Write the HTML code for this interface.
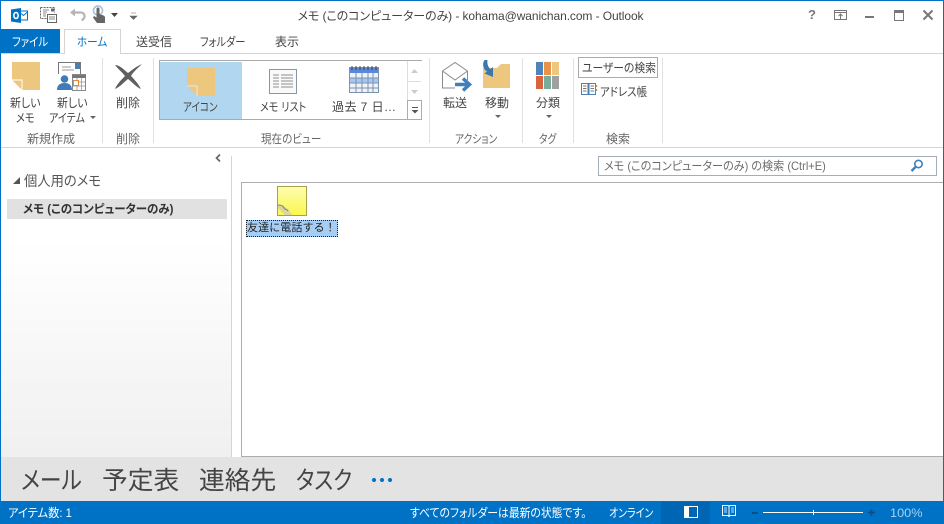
<!DOCTYPE html>
<html lang="ja"><head><meta charset="utf-8"><style>
html,body{margin:0;padding:0;width:944px;height:524px;overflow:hidden;background:#fff}
body{position:relative;font-family:"Liberation Sans","Noto Sans CJK JP",sans-serif;font-size:12px;color:#444}
.t{position:absolute;white-space:nowrap;line-height:16px;height:16px;letter-spacing:0;font-feature-settings:"palt";transform-origin:0 50%}
.c{transform:translateX(-50%)}
.r{position:absolute}
svg{position:absolute;overflow:visible}
.g{color:#666}
.n{font-size:25px;line-height:30px;height:30px;top:466px}
</style></head><body>
<!-- window border -->
<div class="r" style="left:0;top:0;width:944px;height:1px;background:#0072c6"></div>
<div class="r" style="left:0;top:0;width:1px;height:524px;background:#0072c6"></div>
<div class="r" style="right:0;top:0;width:1px;height:524px;background:#0072c6"></div>

<!-- QAT -->
<svg style="left:11px;top:8px" width="17" height="15" viewBox="0 0 17 15"><rect x="8" y="3" width="8.500" height="9" fill="#fff" stroke="#0072c6"/><path d="M8 4l4.500 3.500L16.500 4" fill="none" stroke="#0072c6"/><path d="M0 1.500L10 0v15L0 13.500z" fill="#0072c6"/><ellipse cx="5" cy="7.500" rx="2.200" ry="3" fill="none" stroke="#fff" stroke-width="1.500"/></svg>
<svg style="left:40px;top:7px" width="17" height="16" viewBox="0 0 17 16" fill="none" stroke="#666"><path d="M.5 .5h14v5M.5 .5v11h6" stroke-dasharray="2 1"/><path d="M3 3h6M3 5h4M3 7h3M3 9h3" stroke="#888"/><rect x="7.500" y="7.500" width="9" height="8" fill="#fff" stroke="#666"/><path d="M9 10h6M9 12h6" stroke="#888"/><rect x="11" y="1.500" width="3" height="3" fill="#667" stroke="none"/></svg>
<svg style="left:70px;top:8px" width="15" height="14" viewBox="0 0 15 14" fill="none"><path d="M4 4.500h6a3.700 3.700 0 0 1 1.500 7.500" stroke="#b4b4b4" stroke-width="2.200"/><path d="M0 4.500L5 .5v8z" fill="#b4b4b4"/></svg>
<svg style="left:92px;top:5px" width="14" height="19" viewBox="0 0 14 19"><circle cx="6" cy="5.500" r="4.500" fill="none" stroke="#a9c4de" stroke-width="1.700"/><path d="M4.500 4a1.500 1.500 0 0 1 3 0v5l4 1.500c1 .5 1.500 1 1.500 2V18H5L1 12.500 2 11l2.500 1.500z" fill="#666"/></svg>
<svg style="left:111px;top:13px" width="7" height="4"><path d="M0 0h7L3.500 4z" fill="#444"/></svg>
<svg style="left:130px;top:13px" width="7" height="7"><path d="M1 0h5M0 3h7L3.500 6.500z" fill="#666" stroke="#666" stroke-width=".6"/></svg>
<div class="t c" style="left:470.500px;top:8px;color:#444;letter-spacing:-.09px">メモ (このコンピューターのみ) - kohama@wanichan.com - Outlook</div>

<!-- window controls -->
<div class="t" style="left:808px;top:7px;font-weight:bold;font-size:13px;color:#777">?</div>
<svg style="left:834px;top:10px" width="13" height="10" fill="none" stroke="#777"><rect x=".5" y=".5" width="12" height="9"/><path d="M0 2.500h13M6.500 9V4M4.500 6l2-2 2 2"/></svg>
<div class="r" style="left:865px;top:16px;width:9px;height:2px;background:#777"></div>
<div class="r" style="left:894px;top:10px;width:8px;height:7px;border:1px solid #777;border-top-width:3px"></div>
<svg style="left:923px;top:10px" width="10" height="10"><path d="M.5 .5l9 9M9.500 .5l-9 9" stroke="#777" stroke-width="2"/></svg>

<!-- tabs -->
<div class="r" style="left:1px;top:29px;width:59px;height:25px;background:#0072c6"></div>
<div class="t" style="left:12px;top:34px;color:#fff;transform:scaleX(.87)">ファイル</div>
<div class="r" style="left:1px;top:53px;width:942px;height:1px;background:#d4d4d4"></div>
<div class="r" style="left:64px;top:29px;width:57px;height:25px;border:1px solid #d4d4d4;border-bottom:0;background:#fff;box-sizing:border-box"></div>
<div class="t" style="left:77px;top:34px;color:#0072c6;transform:scaleX(.88)">ホーム</div>
<div class="t" style="left:136px;top:34px">送受信</div>
<div class="t" style="left:200px;top:34px;transform:scaleX(.85)">フォルダー</div>
<div class="t" style="left:275px;top:34px">表示</div>

<!-- ribbon separators -->
<div class="r" style="left:102px;top:58px;width:1px;height:85px;background:#e1e1e1"></div>
<div class="r" style="left:153px;top:58px;width:1px;height:85px;background:#e1e1e1"></div>
<div class="r" style="left:429px;top:58px;width:1px;height:85px;background:#e1e1e1"></div>
<div class="r" style="left:522px;top:58px;width:1px;height:85px;background:#e1e1e1"></div>
<div class="r" style="left:573px;top:58px;width:1px;height:85px;background:#e1e1e1"></div>
<div class="r" style="left:662px;top:58px;width:1px;height:85px;background:#e1e1e1"></div>
<div class="r" style="left:1px;top:147px;width:942px;height:1px;background:#d4d4d4"></div>

<!-- New group -->
<svg style="left:12px;top:62px" width="28" height="28"><path d="M0 0h28v28H10L0 18z" fill="#eec77f"/><path d="M0 18h10v10" fill="none" stroke="#fff"/></svg>
<div class="t" style="left:10px;top:95px;transform:scaleX(.91)">新しい</div>
<div class="t" style="left:16px;top:110px;transform:scaleX(.85)">メモ</div>
<svg style="left:57px;top:62px" width="30" height="29" fill="none"><path d="M1.500 12V.5h22V12" stroke="#777"/><rect x="18" y="1" width="5" height="6" fill="#4a7fb5"/><path d="M5 5h9M5 8h12" stroke="#999"/><rect x="15.500" y="12.500" width="13" height="16" fill="#fff" stroke="#888"/><path d="M15 13h14v3H15z" fill="#777"/><path d="M20 16v12M24.500 16v12M16 20h12M16 24h12" stroke="#aaa"/><rect x="16.500" y="18.500" width="5" height="5" fill="#fff" stroke="#e08a3c"/><circle cx="7.500" cy="17" r="3.800" fill="#3f7cb8"/><path d="M0 28c0-5 3-7 7.500-7s7.500 2 7.500 7z" fill="#3f7cb8"/></svg>
<div class="t" style="left:57px;top:95px;transform:scaleX(.91)">新しい</div>
<div class="t" style="left:49px;top:110px;transform:scaleX(.84)">アイテム</div>
<svg style="left:90px;top:116px" width="6" height="3"><path d="M0 0h6L3 3z" fill="#666"/></svg>
<div class="t g" style="left:27px;top:131px">新規作成</div>

<!-- Delete -->
<svg style="left:114px;top:63px" width="29" height="27"><path d="M1 2c5 0 9 5 13 8 4-3 9-7 14-9-3 3-9 8-11 12 4 4 8 9 10 13-5-2-10-8-13-10-4 3-8 8-13 10 2-5 7-10 10-13C8 9 4 6 1 2z" fill="#5f5f5f"/></svg>
<div class="t" style="left:116px;top:95px">削除</div>
<div class="t g" style="left:116px;top:131px">削除</div>

<!-- Gallery -->
<div class="r" style="left:159px;top:60px;width:263px;height:60px;border:1px solid #ababab;box-sizing:border-box"></div>
<div class="r" style="left:160px;top:62px;width:82px;height:57px;background:#b1d6f0"></div>
<svg style="left:187px;top:68px" width="28" height="28"><path d="M0 0h28v28H10L0 18z" fill="#eec77f"/><path d="M0 18h10v10" fill="none" stroke="#dfeaf0"/></svg>
<div class="t" style="left:183px;top:99px;transform:scaleX(.8)">アイコン</div>
<svg style="left:269px;top:69px" width="29" height="26" fill="none"><rect x=".5" y=".5" width="27" height="24" fill="#fafafa" stroke="#8a96a5"/><path d="M4 6h6M12 6h12M4 9h6M12 9h12M4 12h6M12 12h12M4 15h6M12 15h12M4 18h6M12 18h12" stroke="#8f8f8f"/></svg>
<div class="t" style="left:260px;top:99px;transform:scaleX(.84)">メモ リスト</div>
<svg style="left:349px;top:66px" width="30" height="28" fill="none"><rect x=".5" y="1.500" width="29" height="25" fill="#eef3fa" stroke="#7e92ab"/><rect x="1" y="2" width="28" height="5" fill="#5a87d8"/><rect x="1" y="12" width="28" height="5" fill="#a6c7f5"/><path d="M7 7v19M13 7v19M19 7v19M24 7v19M1 12h28M1 17h28M1 22h28" stroke="#7e92ab"/><path d="M3 0v4M7 0v4M11 0v4M15 0v4M19 0v4M23 0v4M27 0v4" stroke="#444"/></svg>
<div class="t" style="left:332px;top:99px;letter-spacing:.45px">過去 7 日…</div>
<div class="r" style="left:407px;top:61px;width:15px;height:59px;background:#fff;border:1px solid #ddd;border-top:0;border-right:0;box-sizing:border-box"></div>
<div class="r" style="left:407px;top:81px;width:14px;height:1px;background:#ddd"></div>
<div class="r" style="left:407px;top:100px;width:15px;height:20px;border:1px solid #ababab;box-sizing:border-box;background:#fff"></div>
<svg style="left:411px;top:69px" width="7" height="4"><path d="M0 4h7L3.500 0z" fill="#ccc"/></svg>
<svg style="left:411px;top:90px" width="7" height="4"><path d="M0 0h7L3.500 4z" fill="#ccc"/></svg>
<svg style="left:411px;top:107px" width="8" height="7"><path d="M1 .5h6" stroke="#555"/><path d="M.5 3h7L4 6.500z" fill="#555"/></svg>
<div class="t g" style="left:261px;top:131px;transform:scaleX(.88)">現在のビュー</div>

<!-- Action -->
<svg style="left:442px;top:62px" width="30" height="32" fill="none"><path d="M.5 9L13 .5 25.500 9v9M.5 9v17H13M.5 9L13 18 25.500 9" stroke="#8a8a8a" fill="#fff"/><path d="M13 22.500h13" stroke="#3f7fbd" stroke-width="3.500"/><path d="M21 16.500l6.500 6-6.500 6" stroke="#3f7fbd" stroke-width="3.500"/></svg>
<div class="t" style="left:443px;top:95px">転送</div>
<svg style="left:481px;top:60px" width="30" height="29"><path d="M2 8h14l4-4h9v24H2z" fill="#eec77f"/><path d="M3.500 0C1 4 2 9 6 11.500l-2.500 2L12 17V7l-2.500 2C7 7 6 4 6.500 0z" fill="#3b76b0"/></svg>
<div class="t" style="left:485px;top:95px">移動</div>
<svg style="left:495px;top:115px" width="6" height="3"><path d="M0 0h6L3 3z" fill="#666"/></svg>
<div class="t g" style="left:455px;top:131px;transform:scaleX(.81)">アクション</div>

<!-- Tag -->
<svg style="left:536px;top:62px" width="23" height="27"><rect width="7" height="13" fill="#4e84b9"/><rect x="8" width="7" height="13" fill="#e8934a"/><rect x="16" width="7" height="13" fill="#eec77f"/><rect y="14" width="7" height="13" fill="#d9623f"/><rect x="8" y="14" width="7" height="13" fill="#79ad99"/><rect x="16" y="14" width="7" height="13" fill="#a0a0a0"/></svg>
<div class="t" style="left:536px;top:95px">分類</div>
<svg style="left:546px;top:115px" width="6" height="3"><path d="M0 0h6L3 3z" fill="#666"/></svg>
<div class="t g" style="left:539px;top:131px;transform:scaleX(.81)">タグ</div>

<!-- Search group -->
<div class="r" style="left:578px;top:57px;width:80px;height:21px;border:1px solid #ababab;box-sizing:border-box"></div>
<div class="t" style="left:582px;top:60px;transform:scaleX(.9)">ユーザーの検索</div>
<svg style="left:581px;top:83px" width="17" height="13" fill="none"><path d="M.5 .5h6.500v11H.5zM8 .5h6.500v11H8z" stroke="#4c7fb5"/><path d="M2 3h3.500M2 5.500h3.500M2 8h3.500M9.500 3h3.500M9.500 5.500h3.500M9.500 8h3.500" stroke="#777"/><path d="M15.500 2v2" stroke="#e08a3c" stroke-width="1.500"/><path d="M15.500 6v2" stroke="#79ad99" stroke-width="1.500"/></svg>
<div class="t" style="left:600px;top:84px;transform:scaleX(.87)">アドレス帳</div>
<div class="t g" style="left:606px;top:131px">検索</div>

<!-- Nav pane -->
<div class="r" style="left:1px;top:148px;width:230px;height:309px;background:linear-gradient(#fff 0,#fff 30%,#f0f0f0 100%)"></div>
<div class="r" style="left:231px;top:156px;width:1px;height:301px;background:#d4d4d4"></div>
<svg style="left:215px;top:154px" width="6" height="8" fill="none"><path d="M5 .5L1.500 4 5 7.500" stroke="#666" stroke-width="1.700"/></svg>
<svg style="left:13px;top:177px" width="7" height="7"><path d="M7 0v7H0z" fill="#555"/></svg>
<div class="t" style="left:24px;top:172px;font-size:14px;line-height:18px;height:18px;color:#555;transform:scaleX(.95)">個人用のメモ</div>
<div class="r" style="left:7px;top:199px;width:220px;height:20px;background:#e1e1e1"></div>
<div class="t" style="left:23px;top:201px;font-weight:bold;color:#333;transform:scaleX(.955)">メモ (このコンピューターのみ)</div>

<!-- Search box -->
<div class="r" style="left:598px;top:156px;width:339px;height:20px;border:1px solid #a6adb8;box-sizing:border-box;background:#fff"></div>
<div class="t" style="left:604px;top:158px;color:#6d6d6d;transform:scaleX(.925)">メモ (このコンピューターのみ) の検索 (Ctrl+E)</div>
<svg style="left:910px;top:159px" width="14" height="14" fill="none"><circle cx="8.500" cy="5" r="3.700" stroke="#3f7fbd" stroke-width="1.600"/><path d="M5.500 8L1.500 12" stroke="#3f7fbd" stroke-width="2.400"/></svg>

<!-- Content -->
<div class="r" style="left:241px;top:182px;width:702px;height:275px;border:1px solid #abadb3;border-right:0;box-sizing:border-box;background:#fff"></div>
<svg style="left:277px;top:186px" width="30" height="30"><defs><linearGradient id="y" x1="0" y1="0" x2="0" y2="1"><stop offset="0" stop-color="#fdfdb0"/><stop offset="1" stop-color="#fbf74c"/></linearGradient></defs><rect x=".5" y=".5" width="29" height="29" fill="url(#y)" stroke="#a9a04a"/><path d="M1 19c3-1 6 0 7 2l4 3 3 5H8L1 22z" fill="#d9d6a0"/><path d="M1 19c3 0 5 1 6 3s3 1 4 3" fill="none" stroke="#8d8740"/></svg>
<div class="r" style="left:246px;top:220px;width:92px;height:17px;background:#a6cef5;border:1px dotted #222;box-sizing:border-box"></div>
<div class="t" style="left:247px;top:220px;color:#222;font-feature-settings:normal;font-size:11px;letter-spacing:.1px">友達に電話する！</div>

<!-- Nav bar -->
<div class="r" style="left:1px;top:457px;width:942px;height:44px;background:#e3e3e3"></div>
<div class="t n" style="left:21px;transform:scaleX(.87)">メール</div>
<div class="t n" style="left:102px;transform:scaleX(1.03)">予定表</div>
<div class="t n" style="left:199px;transform:scaleX(1.03)">連絡先</div>
<div class="t n" style="left:296px;transform:scaleX(.84)">タスク</div>
<div class="r" style="left:372px;top:478px;width:4px;height:4px;border-radius:2px;background:#0072c6"></div>
<div class="r" style="left:380px;top:478px;width:4px;height:4px;border-radius:2px;background:#0072c6"></div>
<div class="r" style="left:388px;top:478px;width:4px;height:4px;border-radius:2px;background:#0072c6"></div>

<!-- Status bar -->
<div class="r" style="left:0;top:501px;width:944px;height:23px;background:#0072c6"></div>
<div class="t" style="left:8px;top:505px;color:#fff;transform:scaleX(.94)">アイテム数: 1</div>
<div class="t" style="left:410px;top:505px;color:#fff;transform:scaleX(.9)">すべてのフォルダーは最新の状態です。</div>
<div class="t" style="left:609px;top:505px;color:#fff;transform:scaleX(.83)">オンライン</div>
<div class="r" style="left:661px;top:502px;width:49px;height:22px;background:#0066b3"></div>
<svg style="left:684px;top:506px" width="14" height="12"><rect x=".5" y=".5" width="13" height="11" fill="none" stroke="#fff"/><rect width="5" height="12" fill="#fff"/></svg>
<svg style="left:722px;top:505px" width="14" height="13" fill="none" stroke="#fff"><path d="M.5 .5h5.500l1 1 1-1h5.500v10H8l-1 1-1-1H.5zM7 1.500v9"/><path d="M2 3h3M2 5h3M2 7h3M9 3h3M9 5h3M9 7h3" stroke-width=".8"/></svg>
<div class="r" style="left:752px;top:512px;width:6px;height:2px;background:#0a4f8a"></div>
<div class="r" style="left:763px;top:512px;width:100px;height:1px;background:#fff"></div>
<div class="r" style="left:813px;top:510px;width:1px;height:5px;background:#fff"></div>
<svg style="left:867px;top:508px" width="9" height="9"><path d="M4.500 1v7M1 4.500h7" stroke="#0a4f8a" stroke-width="1.800"/></svg>
<div class="t" style="left:890px;top:505px;color:#a8d0f0;transform:scaleX(1.06)">100%</div>
</body></html>
